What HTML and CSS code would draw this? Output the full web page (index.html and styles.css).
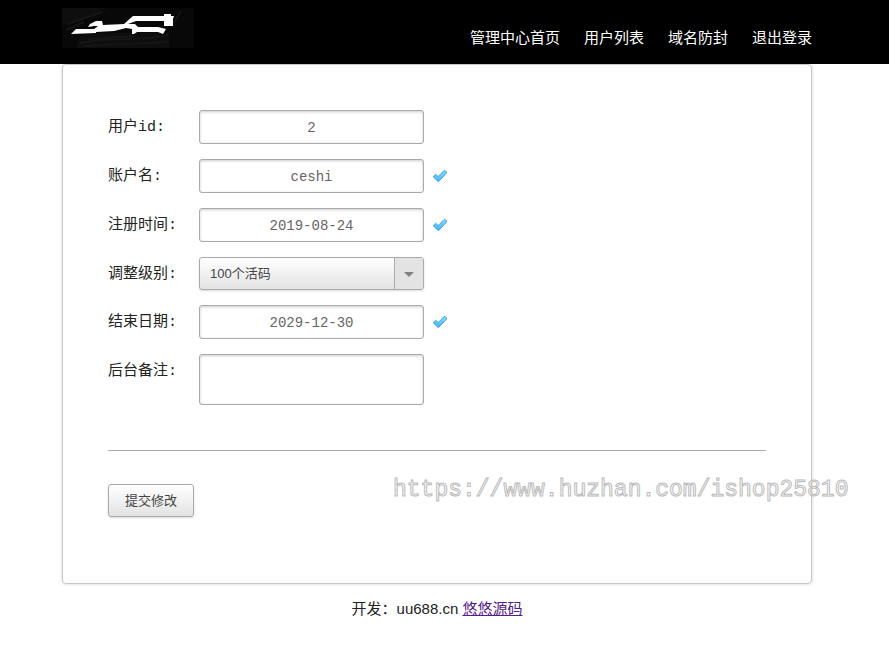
FILE: index.html
```
<!DOCTYPE html>
<html lang="zh-CN">
<head>
  <meta charset="UTF-8">
  <title>用户管理</title>
  <meta name="viewport" content="width=device-width, initial-scale=1.0">
  <link rel="stylesheet" href="styles.css">
</head>
<body>
  <svg width="0" height="0" class="sprite" aria-hidden="true">
    <defs>
      <linearGradient id="tick-fill" x1="0" y1="0" x2="0" y2="1">
        <stop offset="0" stop-color="#7fdcff"/>
        <stop offset="1" stop-color="#45b4f4"/>
      </linearGradient>
    </defs>
    <symbol id="tick" viewBox="0 0 14 12">
      <path d="M.6 6.2L2.6 4.3L5.2 6.5L11 .7H12.4L13.5 1.8V3.1L5.8 11.3H4.9L.6 7.2Z" fill="url(#tick-fill)" stroke="#4b9fe6" stroke-linejoin="round"/>
    </symbol>
  </svg>
  <header>
    <div class="header-inner">
      <a class="logo" href="#" aria-label="首页">
        <svg width="132" height="40" viewBox="0 0 132 40">
          <rect width="132" height="40" fill="#080808"/>
          <path d="M0 0H46L24 9L0 18ZM20 25L108 24L107 40H14Z" fill="#0e0e0e"/>
          <path d="M6 16L40 4M4 22L22 14M18 35C50 28 80 34 106 27M22 38L105 34M26 31L72 28M112 14L119 3" stroke="#161616" stroke-width="2" fill="none"/>
          <path d="M9 26L14 21H32L36 18H32L26 19L28 16L34 13H40L41 17L62 16L71 8H102V6H109V8H112L111 11L111 18H102V13H74L66 16H73L76 19H96L104 21L101 26L96 24H75L72 26H70V21L64 20L52 23L34 24V25Z" fill="#fff"/>
        </svg>
      </a>
      <nav>
        <a href="#">管理中心首页</a>
        <a href="#">用户列表</a>
        <a href="#">域名防封</a>
        <a href="#">退出登录</a>
      </nav>
    </div>
  </header>
  <main>
    <form class="container">
      <div class="row">
        <label for="uid">用户id:</label>
        <input id="uid" type="text" value="2">
      </div>
      <div class="row">
        <label for="account">账户名:</label>
        <input id="account" type="text" value="ceshi">
        <svg class="tick"><use href="#tick"/></svg>
      </div>
      <div class="row">
        <label for="regtime">注册时间:</label>
        <input id="regtime" type="text" value="2019-08-24">
        <svg class="tick"><use href="#tick"/></svg>
      </div>
      <div class="row">
        <label for="level">调整级别:</label>
        <div class="select">
          <select id="level">
            <option>100个活码</option>
          </select>
        </div>
      </div>
      <div class="row">
        <label for="endtime">结束日期:</label>
        <input id="endtime" type="text" value="2029-12-30">
        <svg class="tick"><use href="#tick"/></svg>
      </div>
      <div class="row">
        <label for="note">后台备注:</label>
        <textarea id="note"></textarea>
      </div>
      <div class="actions">
        <button type="submit">提交修改</button>
      </div>
      <div class="watermark">https://www.huzhan.com/ishop25810</div>
    </form>
  </main>
  <footer>开发：uu688.cn <a href="#">悠悠源码</a></footer>
</body>
</html>
```

FILE: styles.css
```
* { box-sizing: border-box; }
body { margin: 0; background: #fff; color: #222; font: 15px/20px "Liberation Sans", "Noto Sans CJK SC", sans-serif; }
.sprite { position: absolute; }

header, main, footer { padding-right: 15px; }
header { background: #000; }
.header-inner { max-width: 750px; height: 64px; margin: 0 auto; padding-top: 8px; display: flex; justify-content: space-between; }
.logo svg { display: block; }
nav { display: flex; gap: 24px; padding-top: 20px; }
nav a { color: #fff; text-decoration: none; white-space: nowrap; }

.container { position: relative; max-width: 750px; margin: 0 auto; border: 1px solid #c8c8c8; border-radius: 4px; box-shadow: 0 0 3px rgba(0,0,0,0.2); padding: 45px 45px 66px; }

.row { display: flex; align-items: flex-start; margin-bottom: 15px; }
.row label { flex: 0 0 91px; padding-top: 8px; font-family: "Liberation Mono", "Noto Sans CJK SC", monospace; }
input, textarea { width: 225px; border: 1px solid #aaa; border-radius: 3px; background: #fff; box-shadow: inset 0 1px 3px rgba(0,0,0,0.2); color: #666; font: 14px/18px "Liberation Mono", "Noto Sans CJK SC", monospace; outline: none; }
input { height: 34px; padding: 2px 8px 0; text-align: center; }
textarea { height: 51px; padding: 8px; resize: none; display: block; }
.tick { width: 14px; height: 12px; margin: 11px 0 0 9px; }

.select { position: relative; width: 225px; }
.select select { display: block; width: 100%; height: 33px; padding: 0 36px 0 10px; appearance: none; border: 1px solid #aaa; border-radius: 3px; background: linear-gradient(#fff, #e3e3e3); box-shadow: 0 1px 2px rgba(0,0,0,0.15); color: #444; font: 13px "Liberation Sans", "Noto Sans CJK SC", sans-serif; }
.select::before { content: ""; position: absolute; top: 1px; right: 1px; bottom: 1px; width: 28px; border-left: 1px solid #aaa; border-radius: 0 2px 2px 0; background: #e3e3e3; pointer-events: none; }
.select::after { content: ""; position: absolute; top: 15px; right: 10px; border: 5px solid transparent; border-top-color: #808080; border-bottom: 0; pointer-events: none; }

.actions { margin-top: 45px; padding-top: 33px; border-top: 1px solid #aaa; }
button { display: block; height: 33px; padding: 0 16px 2px; border: 1px solid #aaa; border-radius: 3px; background: linear-gradient(#fff, #e3e3e3); box-shadow: 0 1px 2px rgba(0,0,0,0.15); color: #444; font: 13px "Liberation Sans", "Noto Sans CJK SC", sans-serif; cursor: pointer; }

.watermark { position: absolute; top: 410px; left: 330px; font: 23px/30px "Liberation Mono", monospace; color: #fff; -webkit-text-stroke: 1px #bbb; white-space: nowrap; pointer-events: none; }

footer { padding-top: 15px; padding-bottom: 15px; text-align: center; }
footer a { color: #551a8b; }
```
